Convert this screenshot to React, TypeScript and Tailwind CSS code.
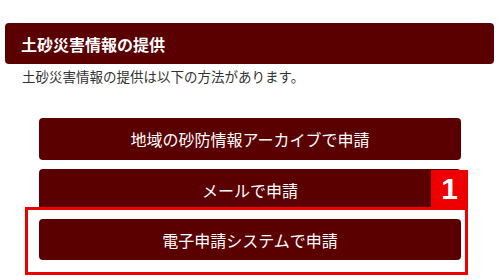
import React from "react";

const buttons = [
  { label: "地域の砂防情報アーカイブで申請", h: "h-[42px]" },
  { label: "メールで申請", h: "h-[41px]" },
  { label: "電子申請システムで申請", h: "h-[41px]" },
];

export default function App() {
  return (
    <div className="relative w-[500px] h-[280px] overflow-hidden bg-white font-['Noto_Sans_CJK_JP',sans-serif]">
      {/* Section header */}
      <div className="pt-[23px] pl-[5px] w-[494px]">
        <div className="flex h-[41px] items-center rounded-[4px] bg-[#5a0000] pl-[16px] text-[16px] font-bold text-white">
          土砂災害情報の提供
        </div>
      </div>

      <p className="mt-[2px] ml-[22px] text-[13.5px] leading-[21px] text-[#333]">
        土砂災害情報の提供は以下の方法があります。
      </p>

      {/* Buttons */}
      <div className="mt-[31px] ml-[39px] flex w-[422px] flex-col gap-[9px]">
        {buttons.map((b) => (
          <button
            key={b.label}
            className={`${b.h} flex items-center justify-center rounded-[4px] bg-[#5a0000] text-[16px] text-white`}
          >
            {b.label}
          </button>
        ))}
      </div>

      {/* Annotation overlay */}
      <div className="absolute left-[25px] top-[207px] h-[68px] w-[443px] border-[3px] border-[#ee0000]" />
      <div className="absolute left-[431px] top-[170px] flex h-[37px] w-[37px] items-center justify-center bg-[#ee0000] font-['Liberation_Sans',sans-serif] text-[30px] font-bold leading-none text-white">
        1
      </div>
    </div>
  );
}
